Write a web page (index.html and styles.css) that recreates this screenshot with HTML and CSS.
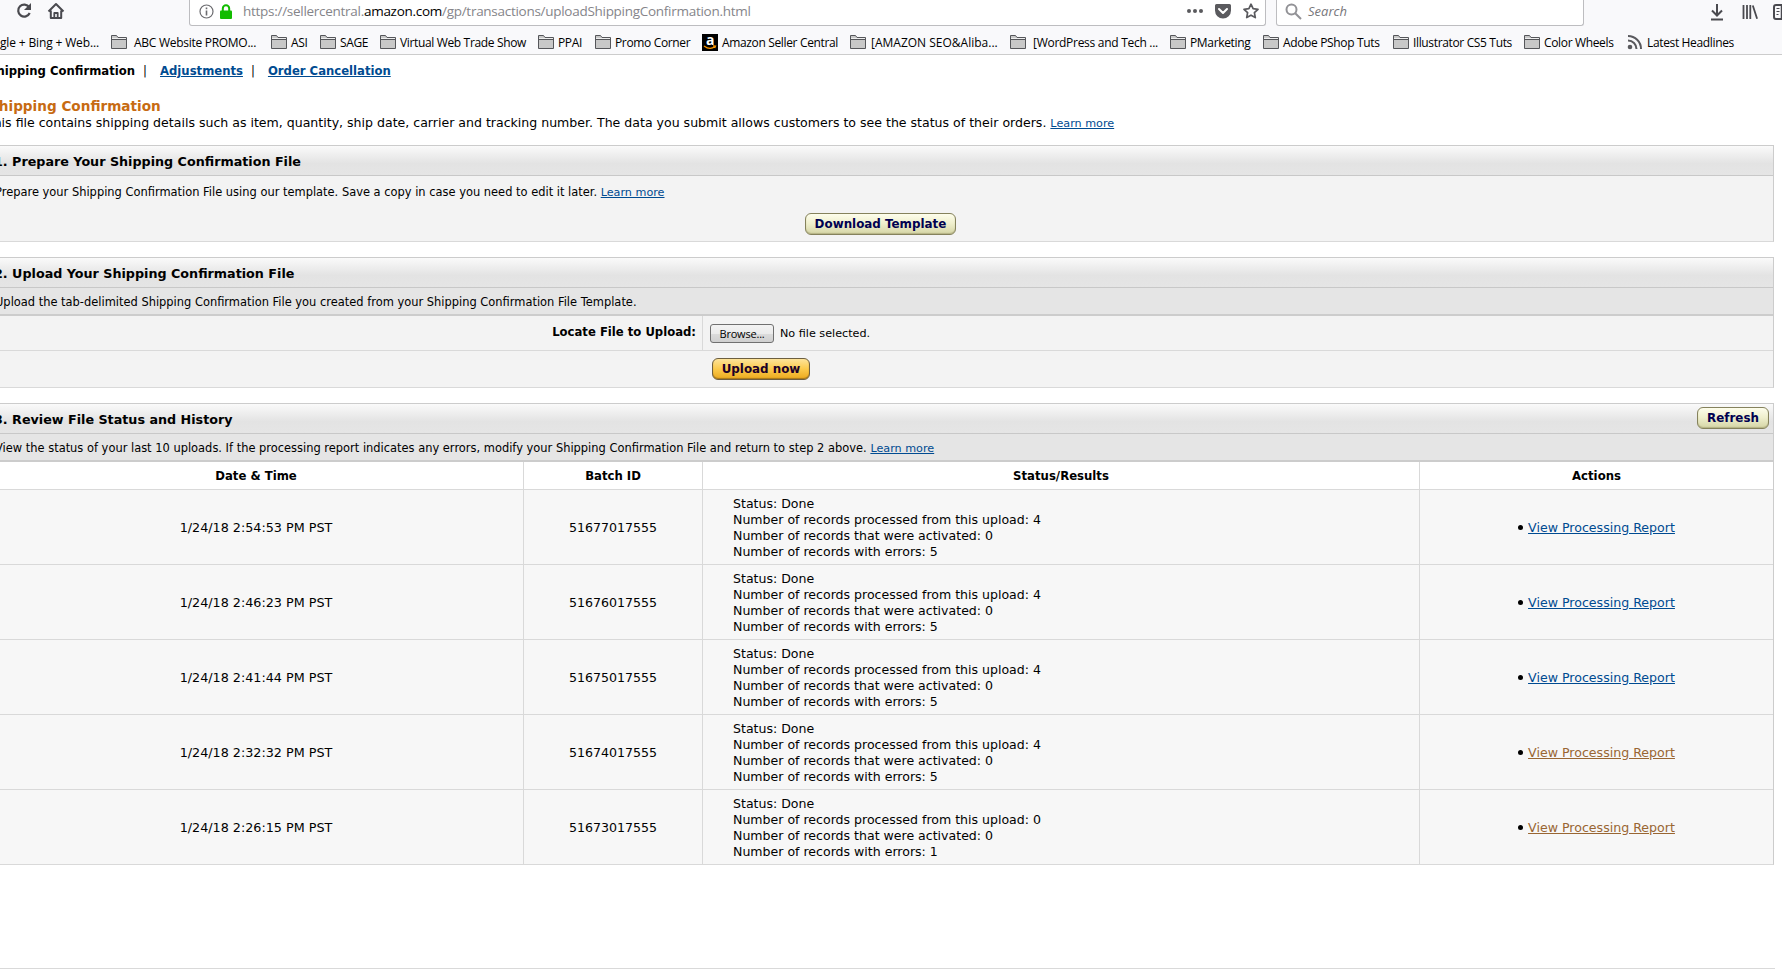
FILE: index.html
```html
<!DOCTYPE html>
<html lang="en">
<head>
    <meta charset="UTF-8">
    <title>Shipping Confirmation</title>
    <link rel="stylesheet" href="styles.css">
</head>
<body>
    <svg class="defs" width="0" height="0">
        <symbol id="folder" viewBox="0 0 16 16">
            <path d="M.5 14.5v-13h5l1.5 2h8.500v11z" fill="#c8c8c8" stroke="#55565a"/>
            <path d="M1 5.500h14" stroke="#55565a" fill="none"/>
            <path d="M1 4.500h14" stroke="#eee" fill="none"/>
        </symbol>
    </svg>

    <div class="navbar">
        <div class="nav-left">
            <svg width="18" height="18" viewBox="0 0 18 18" fill="none" stroke="#4a4a4f" stroke-width="2.200"><path d="M14.200 5.200A6 6 0 1 0 14.700 11"/><path d="M16 1v7H9z" fill="#4a4a4f" stroke="none"/></svg>
            <svg width="18" height="18" viewBox="0 0 18 18" fill="none" stroke="#4a4a4f" stroke-width="2" stroke-linejoin="round"><path d="M1.500 9.500L9 2l7.500 7.500M3.800 8.500V16h10.400V8.500"/><path d="M7.300 16v-5h3.400v5" stroke-width="1.800"/></svg>
        </div>
        <div class="urlbar">
            <svg width="15" height="15" viewBox="0 0 15 15" fill="none" stroke="#6b6b6f"><circle cx="7.500" cy="7.500" r="6.500" stroke-width="1.200"/><path d="M7.500 6.500v5M7.500 3.500v1.800" stroke-width="1.600"/></svg>
            <svg class="lock" width="12" height="15" viewBox="0 0 12 15"><path d="M2.800 7V4.500a3.200 3.200 0 0 1 6.400 0V7" fill="none" stroke="#12bc00" stroke-width="2"/><rect y="6.500" width="12" height="8.500" rx="1" fill="#12bc00"/></svg>
            <span class="url">https://sellercentral.<b>amazon.com</b>/gp/transactions/uploadShippingConfirmation.html</span>
            <svg class="dots" width="16" height="16" viewBox="0 0 16 16" fill="#5a5a5e"><circle cx="2" cy="8" r="2"/><circle cx="8" cy="8" r="2"/><circle cx="14" cy="8" r="2"/></svg>
            <svg width="16" height="16" viewBox="0 0 16 16"><path d="M1.500 1h13A1.500 1.500 0 0 1 16 2.500V7.500a8 8 0 0 1-16 0v-5A1.500 1.500 0 0 1 1.500 1z" fill="#5a5a5e"/><path d="M4 6l4 4 4-4" fill="none" stroke="#fff" stroke-width="2" stroke-linecap="round" stroke-linejoin="round"/></svg>
            <svg class="star" width="16" height="16" viewBox="0 0 16 16" fill="none" stroke="#5a5a5e" stroke-width="1.700" stroke-linejoin="round"><path d="M8 1.200l2.100 4.500 4.900.6-3.600 3.400.9 4.900L8 12.200l-4.300 2.400.9-4.900L1 6.300l4.900-.6z"/></svg>
        </div>
        <div class="searchbar">
            <svg width="17" height="17" viewBox="0 0 17 17" fill="none" stroke="#929296" stroke-width="2"><circle cx="6.500" cy="6.500" r="5"/><path d="M10.200 10.200L16 16"/></svg>
            <span>Search</span>
        </div>
        <div class="nav-right">
            <svg width="14" height="18" viewBox="0 0 14 18" fill="none" stroke="#4a4a4f" stroke-width="2"><path d="M7 1v11M2 7.500l5 5 5-5M1 16.500h12"/></svg>
            <svg width="16" height="16" viewBox="0 0 16 16" fill="none" stroke="#4a4a4f" stroke-width="1.800"><path d="M1.500 1v14M5 1v14M8.300 1v14M10.800 1.500l4.300 13.300"/></svg>
            <svg class="sidebar" width="18" height="16" viewBox="0 0 18 16" fill="none" stroke="#4a4a4f"><rect x="1" y="1" width="16" height="14" rx="2" stroke-width="2"/><path d="M8.500 1v14" stroke-width="1.500"/><path d="M3.500 4.500h3M3.500 7.500h3M3.500 10.500h2" stroke-width="1.200"/></svg>
        </div>
    </div>

    <div class="bookmarks">
        <span class="bm first">gle + Bing + Web...</span>
        <span class="bm wide"><svg><use href="#folder"/></svg>ABC Website PROMO...</span>
        <span class="bm"><svg><use href="#folder"/></svg>ASI</span>
        <span class="bm"><svg><use href="#folder"/></svg>SAGE</span>
        <span class="bm"><svg><use href="#folder"/></svg>Virtual Web Trade Show</span>
        <span class="bm"><svg><use href="#folder"/></svg>PPAI</span>
        <span class="bm"><svg><use href="#folder"/></svg>Promo Corner</span>
        <span class="bm"><span class="amazon">a<svg viewBox="0 0 16 5"><path d="M2 1q6 4.500 11 .5M11 .8l2.500.2-.8 2" fill="none" stroke="#f90" stroke-width="1.300"/></svg></span>Amazon Seller Central</span>
        <span class="bm loose"><svg><use href="#folder"/></svg>[AMAZON SEO&amp;Aliba...</span>
        <span class="bm wide"><svg><use href="#folder"/></svg>[WordPress and Tech ...</span>
        <span class="bm"><svg><use href="#folder"/></svg>PMarketing</span>
        <span class="bm"><svg><use href="#folder"/></svg>Adobe PShop Tuts</span>
        <span class="bm"><svg><use href="#folder"/></svg>Illustrator CS5 Tuts</span>
        <span class="bm"><svg><use href="#folder"/></svg>Color Wheels</span>
        <span class="bm"><svg viewBox="0 0 16 16" fill="none" stroke="#5a5a5e" stroke-width="2"><circle cx="3" cy="13" r="2.300" fill="#5a5a5e" stroke="none"/><path d="M1 6.500A8.500 8.500 0 0 1 9.500 15M1 2A13 13 0 0 1 14 15"/></svg>Latest Headlines</span>
    </div>

    <div class="page">
        <div class="tabs">
            <b>Shipping Confirmation</b><i>|</i><a href="#">Adjustments</a><i>|</i><a href="#">Order Cancellation</a>
        </div>

        <h1>Shipping Confirmation</h1>
        <p class="intro">This file contains shipping details such as item, quantity, ship date, carrier and tracking number. The data you submit allows customers to see the status of their orders. <a class="learn" href="#">Learn more</a></p>

        <div class="box">
            <div class="box-title">1. Prepare Your Shipping Confirmation File</div>
            <div class="prepare">
                <p class="note">Prepare your Shipping Confirmation File using our template. Save a copy in case you need to edit it later. <a class="learn" href="#">Learn more</a></p>
                <button class="btn btn-download">Download Template</button>
            </div>
        </div>

        <div class="box">
            <div class="box-title">2. Upload Your Shipping Confirmation File</div>
            <div class="box-sub"><p class="note">Upload the tab-delimited Shipping Confirmation File you created from your Shipping Confirmation File Template.</p></div>
            <div class="locate">
                <div class="locate-label">Locate File to Upload:</div>
                <div class="locate-file"><button class="browse">Browse...</button><span>No file selected.</span></div>
            </div>
            <div class="upload"><button class="btn btn-upload">Upload now</button></div>
        </div>

        <div class="box">
            <div class="box-title">3. Review File Status and History<button class="btn btn-refresh">Refresh</button></div>
            <div class="box-sub"><p class="note">View the status of your last 10 uploads. If the processing report indicates any errors, modify your Shipping Confirmation File and return to step 2 above. <a class="learn" href="#">Learn more</a></p></div>
            <table class="history">
                <colgroup><col class="c-date"><col class="c-batch"><col class="c-status"><col class="c-actions"></colgroup>
                <tr><th>Date &amp; Time</th><th>Batch ID</th><th>Status/Results</th><th>Actions</th></tr>
                <tr>
                    <td>1/24/18 2:54:53 PM PST</td>
                    <td>51677017555</td>
                    <td class="status">Status: Done<br>Number of records processed from this upload: 4<br>Number of records that were activated: 0<br>Number of records with errors: 5</td>
                    <td><span class="dot"></span><a href="#">View Processing Report</a></td>
                </tr>
                <tr>
                    <td>1/24/18 2:46:23 PM PST</td>
                    <td>51676017555</td>
                    <td class="status">Status: Done<br>Number of records processed from this upload: 4<br>Number of records that were activated: 0<br>Number of records with errors: 5</td>
                    <td><span class="dot"></span><a href="#">View Processing Report</a></td>
                </tr>
                <tr>
                    <td>1/24/18 2:41:44 PM PST</td>
                    <td>51675017555</td>
                    <td class="status">Status: Done<br>Number of records processed from this upload: 4<br>Number of records that were activated: 0<br>Number of records with errors: 5</td>
                    <td><span class="dot"></span><a href="#">View Processing Report</a></td>
                </tr>
                <tr>
                    <td>1/24/18 2:32:32 PM PST</td>
                    <td>51674017555</td>
                    <td class="status">Status: Done<br>Number of records processed from this upload: 4<br>Number of records that were activated: 0<br>Number of records with errors: 5</td>
                    <td><span class="dot"></span><a class="visited" href="#">View Processing Report</a></td>
                </tr>
                <tr>
                    <td>1/24/18 2:26:15 PM PST</td>
                    <td>51673017555</td>
                    <td class="status">Status: Done<br>Number of records processed from this upload: 0<br>Number of records that were activated: 0<br>Number of records with errors: 1</td>
                    <td><span class="dot"></span><a class="visited" href="#">View Processing Report</a></td>
                </tr>
            </table>
        </div>
        <div class="footer-line"></div>
    </div>
</body>
</html>
```
FILE: styles.css
```css
* { margin: 0; padding: 0; box-sizing: border-box; }
body {
    width: 1782px;
    height: 970px;
    overflow: hidden;
    background: #fff;
    color: #000;
    font-family: Verdana, "DejaVu Sans", sans-serif;
    font-size: 12.600px;
    white-space: nowrap;
}
svg { flex: none; }
.defs { display: block; }
a { color: #004b91; }

/* browser toolbar */
.navbar {
    display: flex;
    height: 29px;
    background: #f9f9fb;
    font-family: "Segoe UI", "Open Sans", sans-serif;
    font-size: 13.500px;
}
.navbar > div { flex: none; }
.nav-left {
    display: flex;
    gap: 14px;
    width: 189px;
    padding: 2px 0 0 15px;
}
.urlbar, .searchbar {
    display: flex;
    align-items: center;
    height: 26px;
    padding-bottom: 3px;
    background: #fff;
    border: 1px solid #bdbdc0;
    border-top: 0;
    border-radius: 0 0 3px 3px;
}
.urlbar {
    width: 1077px;
    padding-left: 9px;
    padding-right: 6px;
}
.lock { margin-left: 6px; }
.url {
    margin-left: 11px;
    color: #85858a;
    letter-spacing: -0.280px;
}
.url b { color: #000; font-weight: normal; }
.dots { margin-left: auto; margin-right: 12px; }
.star { margin-left: 12px; }
.searchbar {
    width: 308px;
    margin-left: 10px;
    padding-left: 8px;
    color: #77777b;
    font-size: 13px;
    font-style: italic;
}
.searchbar span { margin-left: 6px; }
.nav-right {
    display: flex;
    align-items: center;
    height: 26px;
    margin-left: 126px;
    padding-bottom: 3px;
    gap: 18px;
}
.sidebar { margin-left: -3px; }

/* bookmarks */
.bookmarks {
    display: grid;
    grid-template-columns: 111px 160px 49px 60px 158px 57px 107px 148px 160px 160px 93px 130px 131px 103px 150px;
    height: 26px;
    background: #f9f9fb;
    border-bottom: 1px solid #ccc;
    font-family: "Segoe UI", "Open Sans", sans-serif;
    font-size: 12px;
    letter-spacing: -0.350px;
}
.bm {
    display: flex;
    align-items: center;
    gap: 4px;
    height: 26px;
}
.bm.first { letter-spacing: -0.150px; }
.bm.wide { gap: 7px; letter-spacing: -0.280px; }
.bm.loose { gap: 5px; letter-spacing: 0; }
.bm > svg { width: 16px; height: 16px; }
.amazon {
    display: flex;
    flex-direction: column;
    align-items: center;
    width: 16px;
    height: 17px;
    background: #000;
    color: #fff;
    font: bold 14px/11px "Open Sans", sans-serif;
}
.amazon svg { width: 16px; height: 5px; }

/* seller central page */
.page { margin-left: -12px; }
.tabs {
    display: flex;
    height: 43px;
    padding: 9px 0 0 0;
    font-size: 11.650px;
    font-weight: bold;
    line-height: 15px;
}
.tabs i {
    width: 25px;
    padding-left: 8px;
    font-style: normal;
    font-weight: normal;
}
h1 {
    height: 17px;
    padding-left: 1px;
    color: #c76b12;
    font-size: 13.600px;
    line-height: 17px;
}
.intro {
    height: 30px;
    margin-left: -2px;
    font-size: 12.550px;
    line-height: 16px;
}
.learn { font-size: 11.200px; }
.box {
    width: 1786px;
    margin-bottom: 15px;
    background: #f3f3f3;
    border: 1px solid #ccc;
    border-bottom-color: #d9d9d9;
}
.box-title {
    display: flex;
    justify-content: space-between;
    height: 30px;
    padding: 0 4px 0 5px;
    background: linear-gradient(#fafafa, #e3e3e3 60%, #e5e5e5);
    border-bottom: 1px solid #c8c8c8;
    font-size: 12.720px;
    font-weight: bold;
    line-height: 32px;
}
.note { padding-left: 6px; font-size: 11.450px; }
.prepare { height: 65px; padding-top: 8px; }
.prepare .note { height: 15px; line-height: 16px; }
.box-sub {
    height: 28px;
    background: #e5e5e5;
    border-bottom: 2px solid #ccc;
    line-height: 28px;
}
.btn {
    height: 22px;
    border: 1px solid #85825c;
    border-radius: 6px;
    background: linear-gradient(#fdfdec, #eeeecb 50%, #d5d5a5);
    box-shadow: inset 0 -1px 1px #b5b386;
    color: #000050;
    font-family: inherit;
    font-size: 11.900px;
    font-weight: bold;
    line-height: 20px;
}
.btn-download { display: block; width: 151px; margin: 14px 0 0 816px; }
.btn-refresh { width: 72px; margin-top: 3px; }
.btn-upload {
    display: block;
    width: 98px;
    background: linear-gradient(#fde39a, #fbca4c 50%, #eba91e);
    border-color: #6d5f40;
    color: #1b0028;
    box-shadow: inset 0 -1px 1px #a87718;
}
.locate {
    display: flex;
    height: 35px;
    border-bottom: 1px solid #d9d9d9;
}
.locate-label {
    width: 714px;
    padding: 8px 6px 0 0;
    border-right: 1px solid #d9d9d9;
    font-size: 11.650px;
    font-weight: bold;
    line-height: 16px;
    text-align: right;
}
.locate-file {
    display: flex;
    align-items: center;
    padding-left: 7px;
    font-size: 11.200px;
}
.browse {
    width: 64px;
    height: 19px;
    margin-right: 6px;
    border: 1px solid #707070;
    border-radius: 3px;
    background: linear-gradient(#f3f3f3, #ebebeb 50%, #dcdcdc 50%, #cfcfcf);
    font: 11px "Open Sans", sans-serif;
    letter-spacing: -0.200px;
}
.upload { height: 36px; padding: 7px 0 0 723px; }

/* upload history */
.history {
    width: 1784px;
    table-layout: fixed;
    border-collapse: separate;
    border-spacing: 0;
    background: #f7f7f7;
}
.c-date { width: 535px; }
.c-batch { width: 179px; }
.c-status { width: 717px; }
.history th, .history td {
    border-right: 1px solid #d9d9d9;
    border-bottom: 1px solid #d9d9d9;
    text-align: center;
    vertical-align: middle;
}
.history th:last-child, .history td:last-child { border-right: 0; }
.history th { height: 28px; padding-top: 1px; background: #fff; font-size: 11.700px; }
.history td { height: 75px; padding-top: 1px; line-height: 16px; }
.history tr:last-child td { height: 74px; border-bottom: 0; }
.history td:first-child { font-size: 12.750px; }
.history td.status { padding-left: 30px; font-size: 12.550px; text-align: left; }
.dot {
    display: inline-block;
    width: 5px;
    height: 5px;
    margin-right: 5px;
    border-radius: 50%;
    background: #000;
    vertical-align: 2px;
}
.visited { color: #996633; }
.footer-line {
    width: 1787px;
    margin-top: 103px;
    border-top: 1px solid #d9d9d9;
}
```
